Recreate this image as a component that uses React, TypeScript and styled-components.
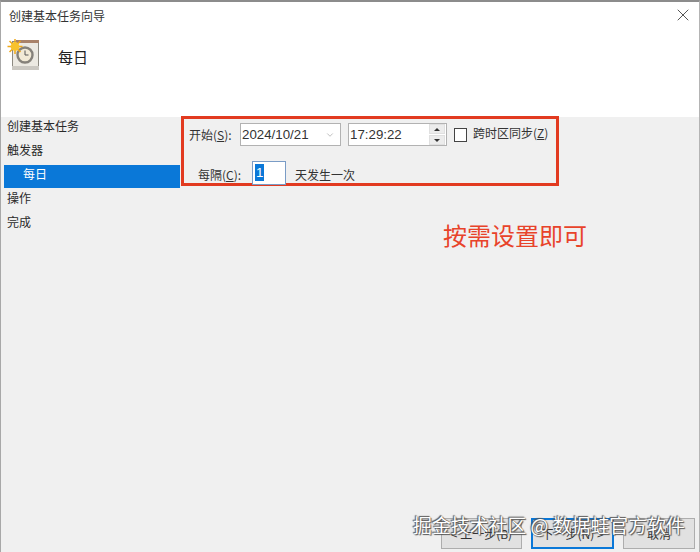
import React from "react";
import styled, { createGlobalStyle } from "styled-components";
import { X, ChevronDown } from "lucide-react";

const GlobalStyle = createGlobalStyle`
  html, body {
    margin: 0;
    padding: 0;
    background: #f0f0f0;
  }
  * {
    box-sizing: border-box;
  }
`;

const Window = styled.div`
  position: relative;
  width: 700px;
  height: 552px;
  display: flex;
  flex-direction: column;
  overflow: hidden;
  border-top: 2px solid #8c8c8c;
  border-left: 1px solid #a8a8a8;
  border-right: 1px solid #b4b4b4;
  background: #f0f0f0;
  color: #1a1a1a;
  font-family: "Noto Sans CJK SC", "Liberation Sans", sans-serif;
  font-size: 12px;
`;

const Header = styled.header`
  height: 115px;
  flex: none;
  background: #fff;
  display: flex;
  flex-direction: column;
`;

const TitleBar = styled.div`
  height: 26px;
  padding: 0 6px 0 8px;
  display: flex;
  align-items: center;
  justify-content: space-between;
  color: #333;
`;

const Heading = styled.div`
  display: flex;
  align-items: center;
  gap: 18px;
  padding: 11px 0 0 6px;
`;

const HeadingText = styled.h1`
  margin: 2px 0 0;
  font-size: 15px;
  font-weight: 400;
  color: #222;
`;

const Main = styled.main`
  flex: 1;
  display: flex;
  min-height: 0;
`;

const Sidebar = styled.nav`
  width: 179px;
  flex: none;
  display: flex;
  flex-direction: column;
`;

const Step = styled.div<{ $active?: boolean }>`
  height: 23px;
  margin: 0 0 1px 3px;
  padding: 0 0 7px ${({ $active }) => ($active ? "19px" : "3px")};
  display: flex;
  align-items: center;
  background: ${({ $active }) => ($active ? "#0a78d8" : "transparent")};
  color: ${({ $active }) => ($active ? "#fff" : "#2a2a2a")};
`;

const Content = styled.section`
  flex: 1;
  display: flex;
  flex-direction: column;
  min-width: 0;
`;

const Highlight = styled.div`
  width: 378px;
  height: 70px;
  margin: -1px 0 0 1px;
  border: 3px solid #e23a20;
  padding: 4px 0 0 5px;
  display: flex;
  flex-direction: column;
  gap: 15px;
`;

const Row = styled.div<{ $indent?: number }>`
  display: flex;
  align-items: center;
  height: 23px;
  padding-left: ${({ $indent }) => $indent ?? 0}px;
`;

const Label = styled.label<{ $width?: number; $drop?: number }>`
  width: ${({ $width }) => $width ?? 51}px;
  flex: none;
  padding-top: ${({ $drop }) => $drop ?? 0}px;
  color: #333;
  white-space: nowrap;
`;

const Key = styled.span`
  text-decoration: underline;
`;

const Field = styled.div<{ $width: number }>`
  width: ${({ $width }) => $width}px;
  height: 23px;
  flex: none;
  background: #fff;
  border: 1px solid #b2b2b2;
  display: flex;
  align-items: center;
  justify-content: space-between;
  padding-left: 1px;
  font-family: "Liberation Sans", sans-serif;
  font-size: 13.3px;
  color: #333;
`;

const DateField = styled(Field)`
  padding-right: 5px;
  margin-right: 7px;
`;

const TimeField = styled(Field)`
  margin-right: 7px;
  padding-right: 1px;
`;

const Spinner = styled.div`
  width: 16px;
  height: 21px;
  display: flex;
  flex-direction: column;
  gap: 1px;
`;

const SpinButton = styled.div`
  flex: 1;
  background: #ececec;
  border: 1px solid #e0e0e0;
  display: flex;
  align-items: center;
  justify-content: center;
`;

const Arrow = styled.span<{ $up?: boolean }>`
  width: 0;
  height: 0;
  border-left: 3px solid transparent;
  border-right: 3px solid transparent;
  ${({ $up }) =>
    $up ? "border-bottom: 3px solid #333;" : "border-top: 3px solid #333;"}
`;

const Checkbox = styled.span`
  width: 13px;
  height: 14px;
  flex: none;
  margin-right: 6px;
  background: #fff;
  border: 1px solid #444;
`;

const CheckLabel = styled.span<{ $drop?: number; $lift?: number }>`
  padding-top: ${({ $drop }) => $drop ?? 0}px;
  padding-bottom: ${({ $lift }) => $lift ?? 0}px;
  color: #333;
  white-space: nowrap;
`;

const NumberField = styled(Field)`
  width: 34px;
  height: 24px;
  margin-right: 9px;
  padding-left: 2px;
  justify-content: flex-start;
  border-color: #7a9cc6;
`;

const Selected = styled.span`
  background: #0a78d8;
  color: #fff;
  height: 17px;
  line-height: 17px;
  padding: 0 1px;
`;

const Annotation = styled.div`
  position: absolute;
  left: 442px;
  top: 216px;
  font-size: 24px;
  line-height: 34px;
  color: #e8432a;
  white-space: nowrap;
`;

const Footer = styled.footer`
  margin-top: auto;
  height: 34px;
  flex: none;
  display: flex;
  gap: 9px;
  padding-left: 261px;
`;

const Button = styled.button<{ $primary?: boolean; $width: number }>`
  width: ${({ $width }) => $width}px;
  height: 31px;
  flex: none;
  padding: 0;
  font: inherit;
  color: #333;
  background: #e1e1e1;
  border: ${({ $primary }) =>
    $primary ? "2px solid #0a78d8" : "1px solid #adadad"};
`;

const Watermark = styled.div`
  position: absolute;
  left: 412px;
  top: 510px;
  font-size: 18.9px;
  line-height: 26px;
  color: #fff;
  white-space: nowrap;
  text-shadow: 0 0 1px #555, 1px 1px 1px #555, -1px -1px 1px #555;
`;

const TaskIcon = () => (
  <svg width="33" height="32" viewBox="0 0 33 32" aria-hidden="true">
    <rect x="5.5" y="2.5" width="26" height="28" fill="#ece9e2" stroke="#8d8a82" />
    <rect x="9" y="1" width="23" height="3" fill="#a9826a" />
    <rect x="5" y="27" width="27" height="4" fill="#cbc8c2" />
    <circle cx="18" cy="16" r="7.5" fill="#f1e9d6" stroke="#85817a" strokeWidth="2.4" />
    <path d="M18 11.5V16h3.5" fill="none" stroke="#555" strokeWidth="1" />
    <g stroke="#f0a818" strokeWidth="1.5">
      <path d="M8 0v15M0.5 7.5h15M2.5 2l11 11M13.5 2l-11 11" />
    </g>
    <circle cx="8" cy="7.5" r="4.4" fill="#f8c22c" />
  </svg>
);

export default function App() {
  return (
    <>
      <GlobalStyle />
      <Window>
        <Header>
          <TitleBar>
            <span>创建基本任务向导</span>
            <X size={20} strokeWidth={1} color="#333" />
          </TitleBar>
          <Heading>
            <TaskIcon />
            <HeadingText>每日</HeadingText>
          </Heading>
        </Header>
        <Main>
          <Sidebar>
            <Step>创建基本任务</Step>
            <Step>触发器</Step>
            <Step $active>每日</Step>
            <Step>操作</Step>
            <Step>完成</Step>
          </Sidebar>
          <Content>
            <Highlight>
              <Row>
                <Label>
                  开始(<Key>S</Key>):
                </Label>
                <DateField $width={101}>
                  2024/10/21
                  <ChevronDown size={10} strokeWidth={1} color="#666" />
                </DateField>
                <TimeField $width={99}>
                  17:29:22
                  <Spinner>
                    <SpinButton>
                      <Arrow $up />
                    </SpinButton>
                    <SpinButton>
                      <Arrow />
                    </SpinButton>
                  </Spinner>
                </TimeField>
                <Checkbox />
                <CheckLabel $lift={4}>
                  跨时区同步(<Key>Z</Key>)
                </CheckLabel>
              </Row>
              <Row $indent={9}>
                <Label $width={54} $drop={4}>
                  每隔(<Key>C</Key>):
                </Label>
                <NumberField $width={34}>
                  <Selected>1</Selected>
                </NumberField>
                <CheckLabel $drop={4}>天发生一次</CheckLabel>
              </Row>
            </Highlight>
            <Footer>
              <Button $width={81}>&lt; 上一步(B)</Button>
              <Button $primary $width={83}>
                下一步(N) &gt;
              </Button>
              <Button $width={72}>取消</Button>
            </Footer>
          </Content>
        </Main>
        <Annotation>按需设置即可</Annotation>
        <Watermark>掘金技术社区 @ 数据蛙官方软件</Watermark>
      </Window>
    </>
  );
}
